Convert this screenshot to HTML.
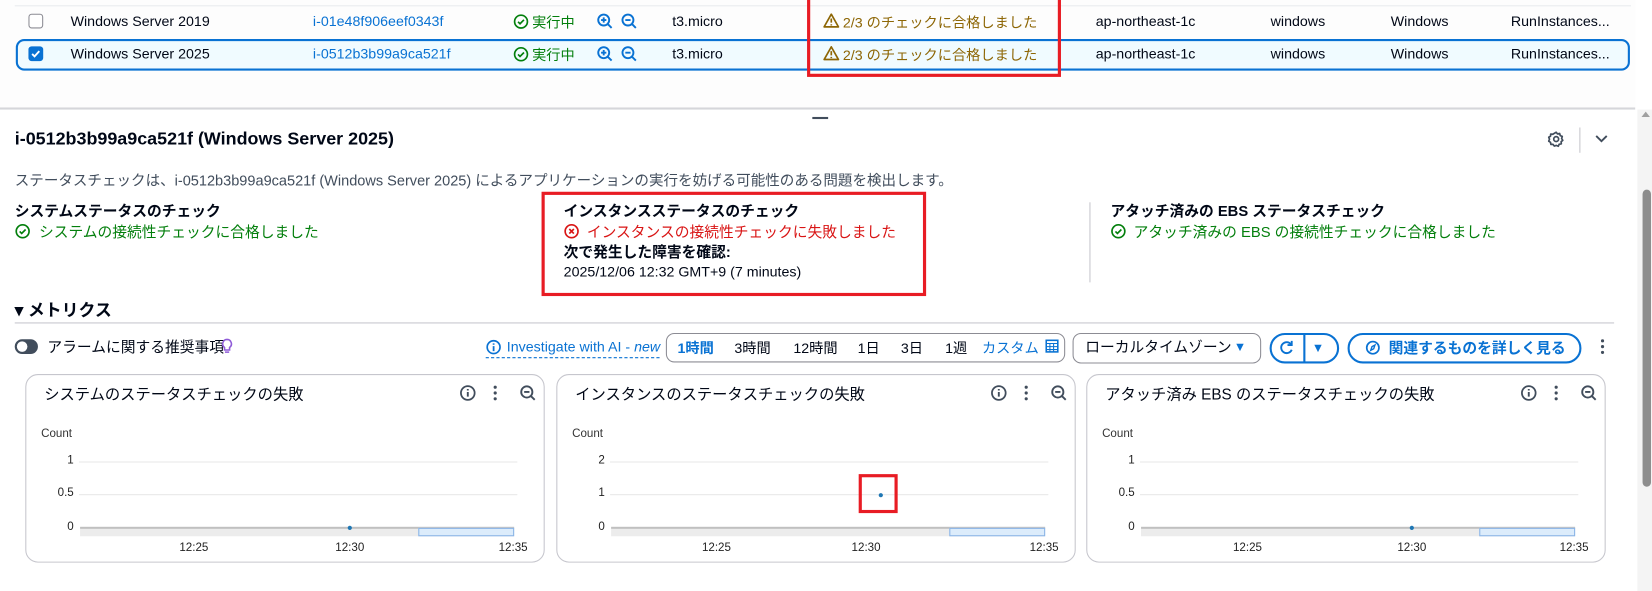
<!DOCTYPE html>
<html><head><meta charset="utf-8">
<style>
*{box-sizing:border-box;margin:0;padding:0}
html,body{width:1652px;height:591px;overflow:hidden;background:#fff}
#w{position:absolute;left:0;top:0;width:1568px;height:561px;transform:scale(1.0536);transform-origin:0 0;font-family:"Liberation Sans","Noto Sans CJK JP",sans-serif;font-size:13.5px;color:#000716}
.a{position:absolute;white-space:nowrap}
.c{transform:translateY(-50%)}
.b{font-weight:bold}
.link{color:#0972d3}
.g{color:#037f0c}
.r{color:#d91515}
.y{color:#8d6605}
.red{position:absolute;border:3px solid #e81c24}
.card{position:absolute;top:355px;width:493px;height:179px;border:1px solid #c6c6cd;border-radius:12px}
.card .t{position:absolute;left:17px;top:7px;font-size:14.5px}
.card .cnt{position:absolute;left:14px;top:50px;font-size:11px;color:#333}
.card .yl{position:absolute;width:20px;text-align:right;left:25px;font-size:11px;color:#222}
.card .gl{position:absolute;left:50px;width:416px;height:1px;background:#e8e8e8}
.card .ax{position:absolute;left:51px;width:412px;top:144px;height:2px;background:#c0c0c0}
.card .band{position:absolute;left:51px;width:412px;top:146px;height:7px;background:#ececec}
.card .sel{position:absolute;left:372px;width:91px;top:145px;height:8px;background:#dcecfb;border:1px solid #8ab4e6}
.card .xl{position:absolute;top:158px;font-size:11px;color:#222;transform:translateX(-50%)}
.card .dot{position:absolute;width:4px;height:4px;border-radius:50%;background:#1f77b4}
.ic{position:absolute;top:8px}
</style></head><body><div id="w">
<div class="a" style="left:0;top:0;width:1552px;height:103px;background:#fdfdfd"></div>
<div class="a" style="left:14px;top:5px;width:1534px;height:1px;background:#e9ebed"></div>
<div class="a" style="left:15px;top:37px;width:1532px;height:30px;border:2px solid #0972d3;border-radius:8px;background:#f0fbff"></div>
<div class="a" style="left:27px;top:13px;width:14px;height:14px;border:1px solid #8c8c94;border-radius:3px;background:#fff"></div>
<div class="a" style="left:27px;top:44px;width:14px;height:14px;border-radius:3px;background:#0972d3"><svg width="14" height="14" viewBox="0 0 14 14"><path d="M3.5 7.2l2.3 2.3 4.5-5" stroke="#fff" stroke-width="1.8" fill="none"/></svg></div>

<div class="a c" style="left:67px;top:20px">Windows Server 2019</div>
<div class="a c" style="left:67px;top:51px">Windows Server 2025</div>
<div class="a c link" style="left:297px;top:20px">i-01e48f906eef0343f</div>
<div class="a c link" style="left:297px;top:51px">i-0512b3b99a9ca521f</div>

<svg class="a" style="left:487px;top:13px" width="15" height="15" viewBox="0 0 16 16"><circle cx="8" cy="8" r="6.5" stroke="#037f0c" stroke-width="1.7" fill="none"/><path d="M5 8.2l2 2 4-4" stroke="#037f0c" stroke-width="1.7" fill="none"/></svg>
<div class="a c g" style="left:505px;top:20px">実行中</div>
<svg class="a" style="left:487px;top:44px" width="15" height="15" viewBox="0 0 16 16"><circle cx="8" cy="8" r="6.5" stroke="#037f0c" stroke-width="1.7" fill="none"/><path d="M5 8.2l2 2 4-4" stroke="#037f0c" stroke-width="1.7" fill="none"/></svg>
<div class="a c g" style="left:505px;top:51px">実行中</div>

<svg class="a" style="left:566px;top:12px" width="40" height="16" viewBox="0 0 40 16"><g stroke="#0972d3" stroke-width="1.8" fill="none"><circle cx="7" cy="7" r="5.2"/><path d="M11 11l3.5 3.5M4.5 7h5M7 4.5v5"/><circle cx="30" cy="7" r="5.2"/><path d="M34 11l3.5 3.5M27.5 7h5"/></g></svg>
<svg class="a" style="left:566px;top:43px" width="40" height="16" viewBox="0 0 40 16"><g stroke="#0972d3" stroke-width="1.8" fill="none"><circle cx="7" cy="7" r="5.2"/><path d="M11 11l3.5 3.5M4.5 7h5M7 4.5v5"/><circle cx="30" cy="7" r="5.2"/><path d="M34 11l3.5 3.5M27.5 7h5"/></g></svg>

<div class="a c" style="left:638px;top:20px">t3.micro</div>
<div class="a c" style="left:638px;top:51px">t3.micro</div>

<svg class="a" style="left:781px;top:12px" width="16" height="15" viewBox="0 0 16 15"><path d="M8 1.5L14.8 13.5H1.2z" stroke="#8d6605" stroke-width="1.6" fill="none" stroke-linejoin="round"/><path d="M8 5.5v4M8 11v1.2" stroke="#8d6605" stroke-width="1.6"/></svg>
<div class="a c y" style="left:800px;top:20px">2/3 のチェックに合格しました</div>
<svg class="a" style="left:781px;top:43px" width="16" height="15" viewBox="0 0 16 15"><path d="M8 1.5L14.8 13.5H1.2z" stroke="#8d6605" stroke-width="1.6" fill="none" stroke-linejoin="round"/><path d="M8 5.5v4M8 11v1.2" stroke="#8d6605" stroke-width="1.6"/></svg>
<div class="a c y" style="left:800px;top:51px">2/3 のチェックに合格しました</div>

<div class="a c" style="left:1040px;top:20px">ap-northeast-1c</div>
<div class="a c" style="left:1040px;top:51px">ap-northeast-1c</div>
<div class="a c" style="left:1206px;top:20px">windows</div>
<div class="a c" style="left:1206px;top:51px">windows</div>
<div class="a c" style="left:1320px;top:20px">Windows</div>
<div class="a c" style="left:1320px;top:51px">Windows</div>
<div class="a c" style="left:1434px;top:20px">RunInstances...</div>
<div class="a c" style="left:1434px;top:51px">RunInstances...</div>
<div class="red" style="left:766px;top:-3px;width:241px;height:76px"></div>

<div class="a" style="left:0;top:102px;width:1552px;height:2px;background:#d5d6da"></div>
<div class="a" style="left:771px;top:111px;width:15px;height:2px;background:#414d5c"></div>
<div class="a" style="left:1554px;top:104px;width:14px;height:457px;background:#f4f4f4"></div>
<svg class="a" style="left:1557px;top:104px" width="10" height="8"><path d="M1 7L5 2 9 7z" fill="#a0a0a0"/></svg>
<div class="a" style="left:1559px;top:180px;width:8px;height:282px;background:#8d8d8d;border-radius:4px"></div>

<div class="a c b" style="left:14px;top:132px;font-size:17px">i-0512b3b99a9ca521f (Windows Server 2025)</div>
<svg class="a" style="left:1469px;top:124px" width="16" height="16" viewBox="0 0 16 16"><g stroke="#414d5c" stroke-width="1.6" fill="none"><path d="M8 1.5l1.3 1.6 2-.4.6 2 1.9.8-.6 2 1.1 1.7-1.6 1.3.2 2-2 .4-.9 1.9-1.9-.8L6.2 14.6 5 13l-2 .1-.4-2L.9 10l.8-1.9L.9 6.3l1.7-1 .2-2 2 .1z" stroke-linejoin="round"/><circle cx="8" cy="8" r="2.3"/></g></svg>
<div class="a" style="left:1499px;top:121px;width:1px;height:24px;background:#c6c6cd"></div>
<svg class="a" style="left:1513px;top:127px" width="14" height="10"><path d="M2 2l5 5 5-5" stroke="#414d5c" stroke-width="1.8" fill="none"/></svg>

<div class="a c" style="left:14px;top:170px;color:#414d5c;font-size:13.8px">ステータスチェックは、i-0512b3b99a9ca521f (Windows Server 2025) によるアプリケーションの実行を妨げる可能性のある問題を検出します。</div>

<div class="a c b" style="left:14px;top:200px;font-size:14px">システムステータスのチェック</div>
<svg class="a" style="left:14px;top:212px" width="15" height="15" viewBox="0 0 16 16"><circle cx="8" cy="8" r="6.5" stroke="#037f0c" stroke-width="1.7" fill="none"/><path d="M5 8.2l2 2 4-4" stroke="#037f0c" stroke-width="1.7" fill="none"/></svg>
<div class="a c g" style="left:37px;top:220px;font-size:14px">システムの接続性チェックに合格しました</div>

<div class="a c b" style="left:535px;top:200px;font-size:14px">インスタンスステータスのチェック</div>
<svg class="a" style="left:535px;top:212px" width="15" height="15" viewBox="0 0 16 16"><circle cx="8" cy="8" r="6.5" stroke="#d91515" stroke-width="1.7" fill="none"/><path d="M5.7 5.7l4.6 4.6M10.3 5.7l-4.6 4.6" stroke="#d91515" stroke-width="1.7"/></svg>
<div class="a c r" style="left:557px;top:220px;font-size:14px">インスタンスの接続性チェックに失敗しました</div>
<div class="a c b" style="left:535px;top:239px;font-size:14px">次で発生した障害を確認:</div>
<div class="a c" style="left:535px;top:258px">2025/12/06 12:32 GMT+9 (7 minutes)</div>
<div class="red" style="left:514px;top:182px;width:365px;height:99px"></div>

<div class="a" style="left:1034px;top:192px;width:1px;height:76px;background:#c6c6cd"></div>
<div class="a c b" style="left:1054px;top:200px;font-size:14px">アタッチ済みの EBS ステータスチェック</div>
<svg class="a" style="left:1054px;top:212px" width="15" height="15" viewBox="0 0 16 16"><circle cx="8" cy="8" r="6.5" stroke="#037f0c" stroke-width="1.7" fill="none"/><path d="M5 8.2l2 2 4-4" stroke="#037f0c" stroke-width="1.7" fill="none"/></svg>
<div class="a c g" style="left:1076px;top:220px;font-size:14px">アタッチ済みの EBS の接続性チェックに合格しました</div>

<div class="a c b" style="left:14px;top:293px;font-size:16px">▾ メトリクス</div>
<div class="a" style="left:14px;top:306px;width:1518px;height:1px;background:#c6c6cd"></div>

<div class="a" style="left:14px;top:322px;width:22px;height:14px;border-radius:7px;background:#414d5c"></div>
<div class="a" style="left:16px;top:324px;width:10px;height:10px;border-radius:5px;background:#fff"></div>
<div class="a c" style="left:45px;top:329px;font-size:14px">アラームに関する推奨事項</div>
<svg class="a" style="left:210px;top:321px" width="11" height="15" viewBox="0 0 11 15"><path d="M5.5 1.2a4.2 4.2 0 0 0-2.4 7.6v2.4h4.8V8.8A4.2 4.2 0 0 0 5.5 1.2zM3.5 13.2h4" stroke="#8f5bd8" stroke-width="1.5" fill="none"/></svg>

<svg class="a" style="left:461px;top:322px" width="15" height="15" viewBox="0 0 16 16"><circle cx="8" cy="8" r="6.5" stroke="#0972d3" stroke-width="1.7" fill="none"/><path d="M8 7v5M8 4.2v1.4" stroke="#0972d3" stroke-width="1.8"/></svg>
<div class="a c link" style="left:481px;top:329px">Investigate with AI - <i>new</i></div>
<div class="a" style="left:461px;top:339px;width:165px;border-top:1px dashed #0972d3"></div>

<div class="a" style="left:632px;top:316px;width:379px;height:28px;border:1px solid #8c8c94;border-radius:8px"></div>
<div class="a c b link" style="left:643px;top:329px">1時間</div>
<div class="a c" style="left:697px;top:329px">3時間</div>
<div class="a c" style="left:753px;top:329px">12時間</div>
<div class="a c" style="left:814px;top:329px">1日</div>
<div class="a c" style="left:855px;top:329px">3日</div>
<div class="a c" style="left:897px;top:329px">1週</div>
<div class="a c link" style="left:932px;top:329px">カスタム</div>
<svg class="a" style="left:992px;top:322px" width="13" height="13" viewBox="0 0 13 13"><rect x="1" y="1" width="11" height="11" fill="none" stroke="#0972d3" stroke-width="1.5"/><path d="M1 4h11M4.5 4v8M8 4v8M1 7h11M1 9.8h11" stroke="#0972d3" stroke-width="1"/></svg>

<div class="a" style="left:1018px;top:316px;width:179px;height:29px;border:1px solid #8c8c94;border-radius:8px"></div>
<div class="a c" style="left:1030px;top:329px;font-size:14px">ローカルタイムゾーン</div>
<div class="a c link" style="left:1171px;top:329px;font-size:12px">▼</div>

<div class="a" style="left:1205px;top:316px;width:66px;height:29px;border:2px solid #0972d3;border-radius:15px"></div>
<div class="a" style="left:1237px;top:317px;width:2px;height:27px;background:#0972d3"></div>
<svg class="a" style="left:1213px;top:322px" width="16" height="16" viewBox="0 0 16 16"><path d="M12.5 5A5.2 5.2 0 1 0 13 10" stroke="#0972d3" stroke-width="1.8" fill="none"/><path d="M13 1.5V5.5H9" stroke="#0972d3" stroke-width="1.8" fill="none"/></svg>
<div class="a c link" style="left:1245px;top:330px;font-size:12px">▼</div>

<div class="a" style="left:1279px;top:316px;width:222px;height:29px;border:2px solid #0972d3;border-radius:15px"></div>
<svg class="a" style="left:1296px;top:323px" width="14" height="14" viewBox="0 0 14 14"><circle cx="7" cy="7" r="5.8" stroke="#0972d3" stroke-width="1.6" fill="none"/><path d="M9 4.5L7.8 8 5 9.5 6.2 6z" stroke="#0972d3" stroke-width="1.3" fill="none"/></svg>
<div class="a c b link" style="left:1318px;top:330px;font-size:14px">関連するものを詳しく見る</div>
<svg class="a" style="left:1518px;top:321px" width="6" height="16"><circle cx="3" cy="2.5" r="1.5" fill="#414d5c"/><circle cx="3" cy="8" r="1.5" fill="#414d5c"/><circle cx="3" cy="13.5" r="1.5" fill="#414d5c"/></svg>

<div class="card" style="left:24px">
<div class="t">システムのステータスチェックの失敗</div>
<svg class="ic" style="left:411px" width="80" height="18" viewBox="0 0 80 18"><circle cx="8" cy="9" r="6.5" stroke="#414d5c" stroke-width="1.7" fill="none"/><path d="M8 8v4.5M8 5.2v1.4" stroke="#414d5c" stroke-width="1.8"/><circle cx="34" cy="3.5" r="1.5" fill="#414d5c"/><circle cx="34" cy="9" r="1.5" fill="#414d5c"/><circle cx="34" cy="14.5" r="1.5" fill="#414d5c"/><circle cx="64" cy="8" r="5.3" stroke="#414d5c" stroke-width="1.8" fill="none"/><path d="M61.5 8h5M68 12l3.5 3.5" stroke="#414d5c" stroke-width="1.8"/></svg>
<div class="cnt">Count</div>
<div class="yl" style="top:75px">1</div><div class="gl" style="top:82px"></div>
<div class="yl" style="top:106px">0.5</div><div class="gl" style="top:113px"></div>
<div class="yl" style="top:138px">0</div>
<div class="ax"></div><div class="band"></div><div class="sel"></div>
<div class="dot" style="left:305px;top:143px"></div>
<div class="xl" style="left:159px">12:25</div><div class="xl" style="left:307px">12:30</div><div class="xl" style="left:462px">12:35</div>
</div>

<div class="card" style="left:528px">
<div class="t">インスタンスのステータスチェックの失敗</div>
<svg class="ic" style="left:411px" width="80" height="18" viewBox="0 0 80 18"><circle cx="8" cy="9" r="6.5" stroke="#414d5c" stroke-width="1.7" fill="none"/><path d="M8 8v4.5M8 5.2v1.4" stroke="#414d5c" stroke-width="1.8"/><circle cx="34" cy="3.5" r="1.5" fill="#414d5c"/><circle cx="34" cy="9" r="1.5" fill="#414d5c"/><circle cx="34" cy="14.5" r="1.5" fill="#414d5c"/><circle cx="64" cy="8" r="5.3" stroke="#414d5c" stroke-width="1.8" fill="none"/><path d="M61.5 8h5M68 12l3.5 3.5" stroke="#414d5c" stroke-width="1.8"/></svg>
<div class="cnt">Count</div>
<div class="yl" style="top:75px">2</div><div class="gl" style="top:82px"></div>
<div class="yl" style="top:106px">1</div><div class="gl" style="top:113px"></div>
<div class="yl" style="top:138px">0</div>
<div class="ax"></div><div class="band"></div><div class="sel"></div>
<div class="dot" style="left:305px;top:112px"></div>
<div class="xl" style="left:151px">12:25</div><div class="xl" style="left:293px">12:30</div><div class="xl" style="left:462px">12:35</div>
</div>
<div class="red" style="left:815px;top:450px;width:37px;height:37px"></div>

<div class="card" style="left:1031px">
<div class="t">アタッチ済み EBS のステータスチェックの失敗</div>
<svg class="ic" style="left:411px" width="80" height="18" viewBox="0 0 80 18"><circle cx="8" cy="9" r="6.5" stroke="#414d5c" stroke-width="1.7" fill="none"/><path d="M8 8v4.5M8 5.2v1.4" stroke="#414d5c" stroke-width="1.8"/><circle cx="34" cy="3.5" r="1.5" fill="#414d5c"/><circle cx="34" cy="9" r="1.5" fill="#414d5c"/><circle cx="34" cy="14.5" r="1.5" fill="#414d5c"/><circle cx="64" cy="8" r="5.3" stroke="#414d5c" stroke-width="1.8" fill="none"/><path d="M61.5 8h5M68 12l3.5 3.5" stroke="#414d5c" stroke-width="1.8"/></svg>
<div class="cnt">Count</div>
<div class="yl" style="top:75px">1</div><div class="gl" style="top:82px"></div>
<div class="yl" style="top:106px">0.5</div><div class="gl" style="top:113px"></div>
<div class="yl" style="top:138px">0</div>
<div class="ax"></div><div class="band"></div><div class="sel"></div>
<div class="dot" style="left:306px;top:143px"></div>
<div class="xl" style="left:152px">12:25</div><div class="xl" style="left:308px">12:30</div><div class="xl" style="left:462px">12:35</div>
</div>
</div></body></html>
